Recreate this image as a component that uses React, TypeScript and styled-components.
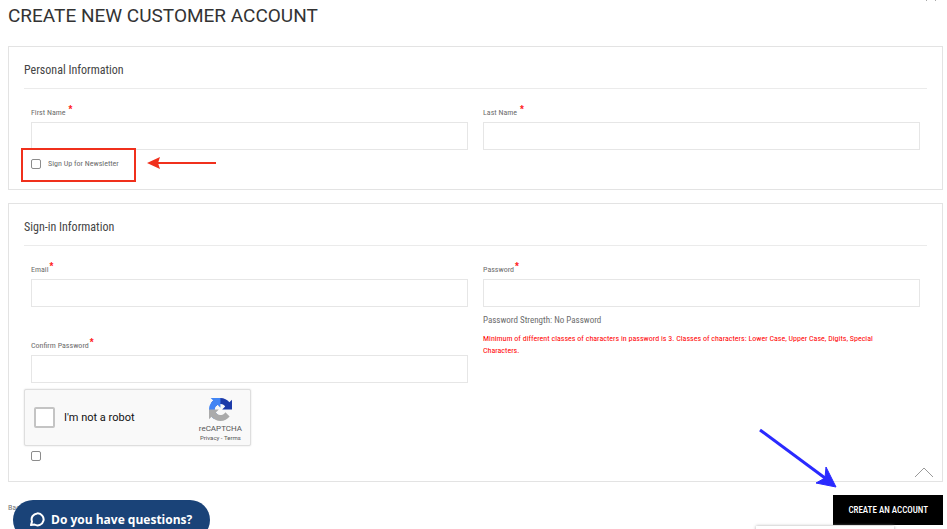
import React from 'react';
import styled, { createGlobalStyle } from 'styled-components';

const GlobalStyle = createGlobalStyle`
  * { box-sizing: border-box; }
  body {
    margin: 0;
    background: #fff;
    color: #6c6c6c;
    font-family: "Roboto Condensed", "Liberation Sans Narrow", Roboto, sans-serif;
    font-size: 8px;
    line-height: 12px;
    overflow: hidden;
  }
`;

const Page = styled.main`
  position: relative;
  padding: 4px 4px 4px 8px;
`;

const Title = styled.h1`
  margin: 0 0 18px;
  color: #333;
  font-family: Roboto, sans-serif;
  font-size: 19px;
  font-weight: 400;
  line-height: 24px;
`;

const CloseIcon = styled.svg`
  position: absolute;
  top: -9px;
  right: 10px;
  width: 12px;
  height: 10px;
`;

const Panel = styled.section`
  position: relative;
  margin-bottom: 13px;
  padding: 15px;
  border: 1px solid #e3e3e3;
`;

const PanelTitle = styled.h2`
  margin: 0 0 18px;
  padding-bottom: 10px;
  border-bottom: 1px solid #ebebeb;
  color: #444;
  font-size: 12px;
  font-weight: 400;
  line-height: 16px;
`;

const Fields = styled.div`
  display: grid;
  grid-template-columns: 1fr 1fr;
  column-gap: 15px;
  padding: 0 7px;
`;

const Field = styled.div<{ $offset?: boolean }>`
  display: flex;
  flex-direction: column;
  padding-top: ${(p) => (p.$offset ? 33 : 0)}px;
`;

const Label = styled.label`
  margin-bottom: 3px;
`;

const Star = styled.span`
  margin-left: 1px;
  color: #f22;
  font-family: "Liberation Sans", sans-serif;
  font-size: 10px;
  font-weight: 700;
  line-height: 0;
  vertical-align: 2px;
`;

const TextBox = styled.input`
  width: 100%;
  height: 28px;
  margin: 0;
  padding: 0 8px;
  border: 1px solid #e6e6e6;
  border-radius: 0;
  background: #fff;
  font: inherit;
`;

const Choice = styled.div<{ $compact?: boolean }>`
  position: relative;
  display: flex;
  align-items: center;
  gap: 7px;
  width: max-content;
  min-height: 12px;
  margin: ${(p) => (p.$compact ? '4px 7px' : '8px 7px 4px')};
`;

const CheckBox = styled.input<{ $large?: boolean }>`
  appearance: none;
  flex: none;
  width: ${(p) => (p.$large ? 21 : 10)}px;
  height: ${(p) => (p.$large ? 21 : 10)}px;
  margin: 0;
  border: ${(p) => (p.$large ? '2px solid #c4c4c4' : '1px solid #8c8c8c')};
  border-radius: 2px;
  background: #fff;
`;

const Highlight = styled.div`
  position: absolute;
  inset: -10px -17px -12px -10px;
  border: 2px solid #f0301c;
  pointer-events: none;
`;

const RedArrow = styled.svg`
  position: absolute;
  top: -2px;
  left: 116px;
  width: 70px;
  height: 14px;
`;

const Strength = styled.div`
  margin-top: 6px;
  font-size: 9px;
  line-height: 14px;
`;

const Hint = styled.p`
  margin: 6px 30px 0 0;
  color: #f00;
`;

const PasswordColumn = styled.div`
  grid-column: 2;
  grid-row: 1 / span 2;
`;

const Captcha = styled.div`
  display: flex;
  align-items: center;
  width: 227px;
  height: 57px;
  margin-top: 6px;
  padding: 0 8px 0 9px;
  border: 1px solid #dedede;
  border-radius: 2px;
  background: #f9f9f9;
  box-shadow: 0 0 2px #ddd;
  color: #555;
  font-family: Roboto, sans-serif;
`;

const RobotLabel = styled.label`
  flex: 1;
  margin-left: 9px;
  color: #111;
  font-size: 11px;
`;

const Brand = styled.div`
  display: flex;
  flex-direction: column;
  align-items: center;
  padding-top: 3px;
  font-size: 8px;
  line-height: 10px;
`;

const BrandLogo = styled.svg`
  width: 23px;
  height: 23px;
  margin-bottom: 3px;
`;

const Legal = styled.small`
  font-size: 6px;
  line-height: 7px;

  a {
    color: inherit;
    text-decoration: none;
  }
`;

const ToTop = styled.button`
  position: absolute;
  right: 8px;
  bottom: 3px;
  padding: 0;
  border: 0;
  background: none;
  line-height: 0;
`;

const Actions = styled.footer`
  position: relative;
  display: flex;
  align-items: center;
  justify-content: space-between;
`;

const BackLink = styled.a`
  align-self: start;
  margin-top: 7px;
  color: #777;
  text-decoration: none;
`;

const Submit = styled.button`
  height: 30px;
  padding: 0 15px;
  border: 0;
  background: #000;
  color: #fff;
  font: inherit;
  font-size: 9px;
  font-weight: 500;
`;

const BlueArrow = styled.svg`
  position: absolute;
  right: 104px;
  top: -70px;
  width: 84px;
  height: 66px;
`;

const Chat = styled.button`
  position: fixed;
  left: 13px;
  bottom: -11px;
  display: flex;
  align-items: center;
  gap: 6px;
  height: 40px;
  padding: 0 18px 2px 16px;
  border: 0;
  border-radius: 20px;
  background: #1a4378;
  color: #fff;
  font-family: "Open Sans", sans-serif;
  font-size: 12px;
  font-weight: 700;
`;

const Badge = styled.aside`
  position: fixed;
  right: 53px;
  bottom: -37px;
  width: 138px;
  height: 40px;
  background: #fff;
  box-shadow: 0 0 3px #aaa;
`;

function Input({ id, label, type = 'text', offset }: { id: string; label: string; type?: string; offset?: boolean }) {
  return (
    <Field $offset={offset}>
      <Label htmlFor={id}>
        {label}
        <Star>*</Star>
      </Label>
      <TextBox id={id} type={type} />
    </Field>
  );
}

export default function App() {
  return (
    <>
      <GlobalStyle />
      <Page>
        <Title>CREATE NEW CUSTOMER ACCOUNT</Title>
        <CloseIcon viewBox="0 0 12 10" aria-hidden="true">
          <path d="M1 0l10 10M11 0L1 10" stroke="#aaa" />
        </CloseIcon>

        <Panel>
          <PanelTitle>Personal Information</PanelTitle>
          <Fields>
            <Input id="first" label="First Name " />
            <Input id="last" label="Last Name " />
          </Fields>
          <Choice>
            <CheckBox id="newsletter" type="checkbox" />
            <label htmlFor="newsletter">Sign Up for Newsletter</label>
            <Highlight />
            <RedArrow viewBox="0 0 70 14" aria-hidden="true">
              <path d="M10 7h59" stroke="#f0301c" strokeWidth="2" />
              <path d="M0 7L13 1l-2 6 2 6z" fill="#f0301c" />
            </RedArrow>
          </Choice>
        </Panel>

        <Panel>
          <PanelTitle>Sign-in Information</PanelTitle>
          <Fields>
            <Input id="email" label="Email" type="email" />
            <PasswordColumn>
              <Input id="password" label="Password" type="password" />
              <Strength>Password Strength: No Password</Strength>
              <Hint>
                Minimum of different classes of characters in password is 3. Classes of characters: Lower Case, Upper
                Case, Digits, Special Characters.
              </Hint>
            </PasswordColumn>
            <Input id="confirm" label="Confirm Password" type="password" offset />
          </Fields>
          <Captcha>
            <CheckBox id="robot" type="checkbox" $large />
            <RobotLabel htmlFor="robot">I'm not a robot</RobotLabel>
            <Brand>
              <BrandLogo viewBox="0 0 64 64" aria-hidden="true">
                <path
                  fill="#1c3aa9"
                  d="M64 31.955l-.033-1.37V4.687l-7.16 7.16C50.948 4.674 42.033.093 32.05.093c-10.4 0-19.622 4.96-25.458 12.64l11.736 11.86a15.55 15.55 0 0 1 4.754-5.334c2.05-1.6 4.952-2.906 8.968-2.906.485 0 .86.057 1.135.163 4.976.393 9.288 3.14 11.828 7.124l-8.307 8.307L64 31.953"
                />
                <path
                  fill="#4285f4"
                  d="M31.862.094l-1.37.033H4.594l7.16 7.16C4.58 13.147 0 22.06 0 32.046c0 10.4 4.96 19.622 12.64 25.458L24.5 45.768a15.55 15.55 0 0 1-5.334-4.754c-1.6-2.05-2.906-4.952-2.906-8.968 0-.485.057-.86.163-1.135.393-4.976 3.14-9.288 7.124-11.828l8.307 8.307L31.86.095"
                />
                <path
                  fill="#ababab"
                  d="M.001 32.045l.033 1.37v25.898l7.16-7.16c5.86 7.173 14.774 11.754 24.76 11.754 10.4 0 19.622-4.96 25.458-12.64l-11.736-11.86a15.55 15.55 0 0 1-4.754 5.334c-2.05 1.6-4.952 2.906-8.968 2.906-.485 0-.86-.057-1.135-.163-4.976-.393-9.288-3.14-11.828-7.124l8.307-8.307c-10.522.04-22.4.066-27.295-.005"
                />
              </BrandLogo>
              <span>reCAPTCHA</span>
              <Legal>
                <a href="#privacy">Privacy</a> - <a href="#terms">Terms</a>
              </Legal>
            </Brand>
          </Captcha>
          <Choice $compact>
            <CheckBox type="checkbox" aria-label="Confirm" />
          </Choice>
          <ToTop aria-label="Back to top">
            <svg width="20" height="12" viewBox="0 0 20 12" fill="none" stroke="#999">
              <path d="M1 11l9-9 9 9" />
            </svg>
          </ToTop>
        </Panel>

        <Actions>
          <BackLink href="#back">Back</BackLink>
          <Submit type="submit">CREATE AN ACCOUNT</Submit>
          <BlueArrow viewBox="0 0 84 66" aria-hidden="true">
            <path d="M5 5l65 48" stroke="#2a2aff" strokeWidth="3" />
            <path d="M81 62L61 58l9-5 1-11z" fill="#2a2aff" stroke="#2a2aff" />
          </BlueArrow>
        </Actions>
      </Page>

      <Chat>
        <svg width="16" height="16" viewBox="0 0 16 16" fill="none" stroke="#fff" strokeWidth="2" aria-hidden="true">
          <path d="M2 14l1-3.500A6 6 0 1 1 5.500 13.500z" strokeLinejoin="round" />
        </svg>
        Do you have questions?
      </Chat>
      <Badge />
    </>
  );
}
